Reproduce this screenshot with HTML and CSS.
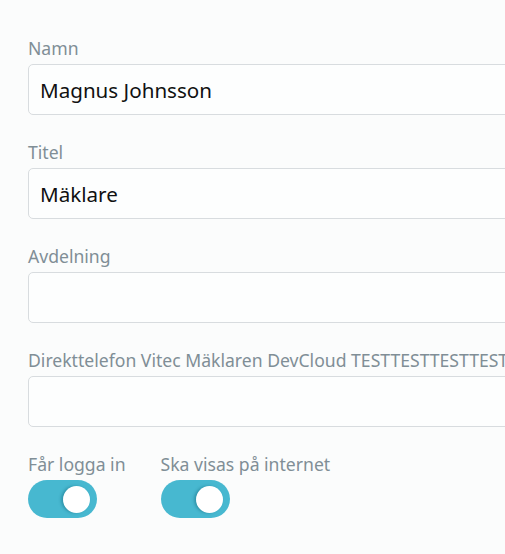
FILE: index.html
```html
<!DOCTYPE html>
<html lang="sv">
<head>
<meta charset="utf-8">
<link rel="stylesheet" href="styles.css">
</head>
<body>
<form class="form">
  <div class="field">
    <label class="label">Namn</label>
    <input class="input" type="text" value="Magnus Johnsson">
  </div>
  <div class="field">
    <label class="label">Titel</label>
    <input class="input" type="text" value="Mäklare">
  </div>
  <div class="field">
    <label class="label">Avdelning</label>
    <input class="input" type="text" value="">
  </div>
  <div class="field">
    <label class="label">Direkttelefon Vitec Mäklaren DevCloud TESTTESTTESTTESTTEST</label>
    <input class="input" type="text" value="">
  </div>
  <div class="toggles">
    <div class="toggle-field">
      <span class="label">Får logga in</span>
      <span class="switch on"><span class="knob"></span></span>
    </div>
    <div class="toggle-field">
      <span class="label">Ska visas på internet</span>
      <span class="switch on"><span class="knob"></span></span>
    </div>
  </div>
</form>
</body>
</html>
```
FILE: styles.css
```css
html, body {
  margin: 0;
  padding: 0;
  background: #fbfcfc;
  overflow: hidden;
}
body {
  font-family: "Noto Sans", "Open Sans", sans-serif;
  width: 505px;
  height: 554px;
}
.form {
  padding: 35px 0 0 28px;
}
.field {
  display: flex;
  flex-direction: column;
  margin-bottom: 24px;
  width: 540px;
}
.label {
  display: block;
  font-size: 17.6px;
  line-height: 26px;
  color: #808e96;
  margin-bottom: 3px;
  white-space: nowrap;
}
.input {
  box-sizing: border-box;
  height: 51px;
  width: 100%;
  border: 1px solid #d8dcdf;
  border-radius: 5px;
  background: #fdfefe;
  padding: 0 11px;
  font-family: inherit;
  font-size: 20.6px;
  color: #111;
  outline: none;
}
.toggles {
  display: flex;
  gap: 35px;
}
.toggle-field {
  display: flex;
  flex-direction: column;
}
.switch {
  position: relative;
  display: block;
  width: 69px;
  height: 38px;
  border-radius: 19px;
  background: #47b8d0;
}
.knob {
  position: absolute;
  top: 5.5px;
  left: 35px;
  width: 27px;
  height: 27px;
  border-radius: 50%;
  background: #fff;
  box-shadow: -2px 0 3px rgba(0, 80, 100, 0.35);
}
```
